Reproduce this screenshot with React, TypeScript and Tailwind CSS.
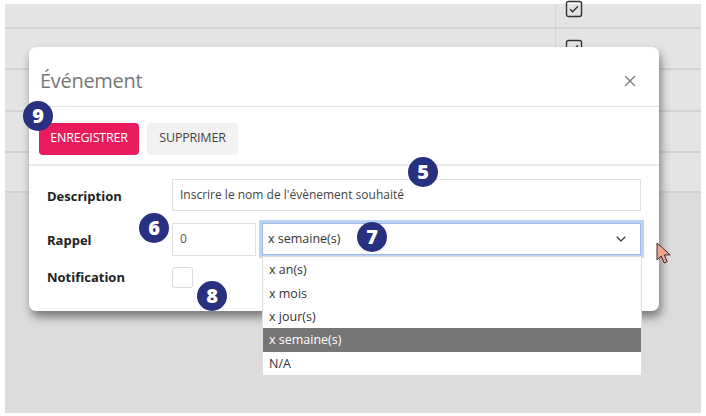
import { X, ChevronDown } from "lucide-react";

const rows = [25, 41, 42, 41, 40];

const options = ["x an(s)", "x mois", "x jour(s)", "x semaine(s)", "N/A"];

const Badge = ({ n, className }: { n: number; className: string }) => (
    <div
        className={`absolute w-[30px] h-[30px] rounded-full bg-[#283080] text-white flex items-center justify-center text-[20px] font-black leading-none ${className}`}
    >
        {n}
    </div>
);

const CheckIcon = () => (
    <svg width="18" height="18" viewBox="0 0 18 18">
        <rect x="1.5" y="1.5" width="15" height="15" rx="2" fill="none" stroke="#333" strokeWidth="1.4" />
        <path d="M5 9.2l2.6 2.6L13 6.3" fill="none" stroke="#333" strokeWidth="1.3" />
    </svg>
);

const App = () => {
    return (
        <div
            className="relative w-[706px] h-[416px] bg-white pt-[4px] px-[5px] pb-[3px] overflow-hidden"
            style={{ fontFamily: '"Open Sans", "Noto Sans", sans-serif' }}
        >
            {/* table behind the dialog */}
            <div className="w-full h-full bg-[#dcdcdc] flex flex-col">
                <div className="bg-[#e4e4e4] flex flex-col">
                    {rows.map((h, i) => (
                        <div
                            key={i}
                            className="flex flex-row border-b-2 border-[#d2d2d2]"
                            style={{ height: h }}
                        >
                            <div className="w-[551px] border-r border-[#d4d4d4]" />
                            <div className="flex-1 pl-[9px] flex items-start">
                                {i < 2 && (
                                    <div className={i === 0 ? "-mt-[4px]" : "mt-[10px]"}>
                                        <CheckIcon />
                                    </div>
                                )}
                            </div>
                        </div>
                    ))}
                </div>
            </div>

            {/* dialog */}
            <div className="absolute left-[29px] top-[47px] w-[630px] h-[264px] bg-white rounded-[7px] shadow-[2px_6px_10px_rgba(0,0,0,0.45)] flex flex-col">
                <div className="h-[60px] flex flex-row items-center justify-between pt-[8px] pl-[11px] pr-[20px] border-b border-[#e4e4e4]">
                    <span className="text-[20px] text-[#777] tracking-[-0.3px]">Événement</span>
                    <X className="w-[18px] h-[18px] text-[#777]" strokeWidth={1.6} />
                </div>
                <div className="h-[59px] flex flex-row items-center gap-[8px] pt-[6px] pl-[10px] border-b-2 border-[#e8e8e8]">
                    <button className="h-[32px] w-[100px] rounded-[4px] bg-[#e81c5c] text-white text-[12.5px] tracking-[-0.2px]">
                        ENREGISTRER
                    </button>
                    <button className="h-[32px] w-[91px] rounded-[4px] bg-[#f2f2f2] text-[#444] text-[12.5px] tracking-[-0.2px]">
                        SUPPRIMER
                    </button>
                </div>
                <div className="flex flex-col gap-[9px] pt-[13px] pl-[18px] pr-[18px]">
                    <div className="flex flex-row items-center">
                        <span className="w-[125px] text-[13px] font-bold text-[#222] pt-[3px]">Description</span>
                        <div className="flex-1 h-[32px] border border-[#e0e0e0] flex items-center px-[7px] text-[12px] text-[#444]">
                            Inscrire le nom de l'évènement souhaité
                        </div>
                    </div>
                    <div className="flex flex-row items-center">
                        <span className="w-[125px] text-[13px] font-bold text-[#222] pt-[3px]">Rappel</span>
                        <div className="w-[84px] h-[33px] border border-[#e0e0e0] flex items-center px-[7px] text-[12px] text-[#555]">
                            0
                        </div>
                        <div className="flex-1 ml-[3px] -mr-[3px] h-[38px] border-[3px] border-[#bad4f6] flex items-center">
                            <div className="w-full h-full border border-[#9dbbe6] bg-white flex flex-row items-center justify-between pl-[5px] pr-[11px] text-[12.5px] text-[#333]">
                                <span>x semaine(s)</span>
                                <ChevronDown className="w-[16px] h-[16px] text-[#333]" strokeWidth={1.6} />
                            </div>
                        </div>
                    </div>
                    <div className="flex flex-row items-center">
                        <span className="w-[125px] text-[13px] font-bold text-[#222]">Notification</span>
                        <div className="w-[21px] h-[21px] border border-[#dcdcdc] rounded-[3px]" />
                    </div>
                </div>
            </div>

            {/* open select options */}
            <div className="absolute left-[262px] top-[256px] w-[380px] bg-white border border-[#dedede] flex flex-col pt-[1px]">
                {options.map((o) => (
                    <div
                        key={o}
                        className={`h-[23.4px] flex items-center pl-[6px] pt-[2px] text-[12.5px] ${
                            o === "x semaine(s)" ? "bg-[#767676] text-white" : "text-[#333]"
                        }`}
                    >
                        {o}
                    </div>
                ))}
            </div>

            {/* mouse pointer */}
            <svg className="absolute left-[656px] top-[242px]" width="16" height="24" viewBox="0 0 16 24">
                <path
                    d="M1 1v17l4.2-4 3 7 3-1.3-3-6.8h6z"
                    fill="#f2a395"
                    stroke="#3a2a2a"
                    strokeWidth="1"
                    strokeLinejoin="round"
                />
            </svg>

            <Badge n={9} className="left-[23px] top-[101px]" />
            <Badge n={5} className="left-[408px] top-[157px]" />
            <Badge n={6} className="left-[139px] top-[213px]" />
            <Badge n={7} className="left-[357px] top-[222px]" />
            <Badge n={8} className="left-[197px] top-[281px]" />
        </div>
    );
};

export default App;
